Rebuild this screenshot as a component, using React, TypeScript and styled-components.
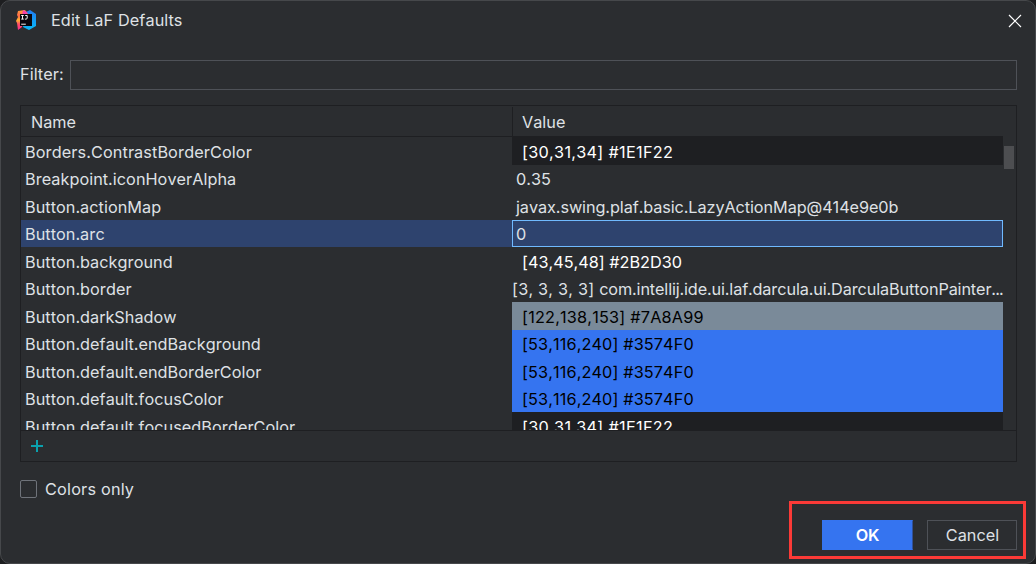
import React from "react";
import styled, { createGlobalStyle } from "styled-components";

const Global = createGlobalStyle`
  * { box-sizing: border-box; }
  html, body { margin: 0; background: #1d1e20; overflow: hidden; }
  body {
    font-family: Inter, "Noto Sans", sans-serif;
    font-size: 16.25px;
    font-kerning: none;
    font-feature-settings: "calt" 0;
    color: #dfe1e5;
    white-space: nowrap;
  }
`;

const Dialog = styled.div`
  position: relative;
  width: 1036px;
  height: 564px;
  display: flex;
  flex-direction: column;
  background: #2b2d30;
  border: 1px solid #46484b;
  border-radius: 10px;
  overflow: hidden;
`;

const TitleBar = styled.header`
  display: flex;
  align-items: center;
  height: 38px;
  padding: 0 13px 0 15px;
`;

const Title = styled.h1`
  flex: 1;
  margin: 0 0 0 15px;
  font-size: 16.25px;
  font-weight: 400;
  line-height: 38px;
  letter-spacing: 0.1px;
`;

const CloseButton = styled.button`
  display: flex;
  margin-top: 2px;
  padding: 0;
  border: 0;
  background: none;
`;

const FilterRow = styled.label`
  display: flex;
  align-items: center;
  height: 30px;
  margin: 21px 18px 0 19px;
`;

const FilterLabel = styled.span`
  width: 50px;
  padding-bottom: 2px;
  letter-spacing: 0.1px;
`;

const FilterInput = styled.input`
  flex: 1;
  height: 30px;
  border: 1px solid #4e5157;
  background: #2b2d30;
  outline: none;
`;

const Table = styled.section`
  display: flex;
  flex-direction: column;
  width: 997px;
  height: 357px;
  margin: 15px 0 0 19px;
  border: 1px solid #1e1f22;
`;

const TableHeader = styled.div`
  display: flex;
  height: 30px;
  line-height: 32px;
`;

const NameHeading = styled.div`
  width: 491px;
  padding-left: 10px;
`;

const ValueHeading = styled.div`
  flex: 1;
  height: 29px;
  margin-top: 1px;
  padding-left: 9px;
  border-left: 1px solid #1e1f22;
  line-height: 30px;
`;

const TableBody = styled.div`
  display: flex;
  height: 294px;
  overflow: hidden;
`;

const Rows = styled.div`
  width: 982px;
`;

const Row = styled.div<{ $height: number; $selected?: boolean }>`
  display: flex;
  height: ${(p) => p.$height}px;
  background: ${(p) => (p.$selected ? "#2e436e" : "transparent")};
`;

const NameCell = styled.div<{ $first?: boolean; $shift: number }>`
  width: 491px;
  padding: ${(p) => p.$shift}px 0 0 4px;
  border-top: ${(p) => (p.$first ? "1px solid #1e1f22" : "0")};
  letter-spacing: ${(p) => (p.$first ? 0.09 : 0.03)}px;
  line-height: 27px;
`;

const ValueCell = styled.div<{
  $fill?: string;
  $ink?: string;
  $indent: number;
  $focused?: boolean;
  $shift: number;
}>`
  width: 491px;
  padding: ${(p) => p.$shift}px 0 0 ${(p) => p.$indent}px;
  background: ${(p) => p.$fill ?? "transparent"};
  color: ${(p) => p.$ink ?? "inherit"};
  box-shadow: ${(p) => (p.$focused ? "inset 0 0 0 1px #70baff" : "none")};
  line-height: 27px;
`;

const Run = styled.span<{ $tracking: number }>`
  letter-spacing: ${(p) => p.$tracking}px;
`;

const ScrollTrack = styled.div`
  flex: 1;
  padding: 10px 2px 0 1px;
`;

const ScrollThumb = styled.div`
  height: 23px;
  background: #4d4e51;
`;

const TableFooter = styled.div`
  flex: 1;
  display: flex;
  align-items: center;
  padding-left: 10px;
  border-top: 1px solid #1e1f22;
`;

const ColorsOnly = styled.label`
  display: flex;
  align-items: center;
  height: 20px;
  margin: 17px 0 0 19px;
  gap: 8px;
  letter-spacing: 0.2px;
`;

const CheckBox = styled.span`
  width: 17px;
  height: 18px;
  border: 1px solid #6f737a;
  border-radius: 2px;
`;

const Buttons = styled.footer`
  display: flex;
  justify-content: flex-end;
  gap: 14px;
  margin: 21px 18px 0 0;
`;

const Button = styled.button<{ $primary?: boolean }>`
  width: ${(p) => (p.$primary ? 91 : 90)}px;
  height: 30px;
  padding: 0 0 0 ${(p) => (p.$primary ? 0 : 1)}px;
  border: 1px solid ${(p) => (p.$primary ? "#3574f0" : "#4e5157")};
  border-right-color: ${(p) => (p.$primary ? "#30519a" : "#4e5157")};
  background: ${(p) => (p.$primary ? "#3574f0" : "#2b2d30")};
  background-clip: padding-box;
  color: ${(p) => (p.$primary ? "#ffffff" : "#dfe1e5")};
  font-family: inherit;
  font-size: 16.25px;
  font-weight: ${(p) => (p.$primary ? 600 : 400)};
  letter-spacing: ${(p) => (p.$primary ? -0.3 : 0)}px;
  line-height: 28px;
`;

const Highlight = styled.div`
  position: absolute;
  left: 788px;
  top: 500px;
  width: 237px;
  height: 58px;
  border: 3px solid #fb3a37;
  pointer-events: none;
`;

type Entry = {
  name: string;
  value: [text: string, tracking: number][];
  height: number;
  fill?: string;
  ink?: string;
  indent: number;
  selected?: boolean;
};

const entries: Entry[] = [
  { name: "Borders.ContrastBorderColor", value: [["[30,31,34] #1E1F22", 0.29]], height: 29, fill: "#1e1f22", ink: "#fff", indent: 10 },
  { name: "Breakpoint.iconHoverAlpha", value: [["0.35", 0]], height: 27, indent: 4 },
  { name: "Button.actionMap", value: [["javax.swing.plaf.basic.LazyActionMap@414e9e0b", -0.08]], height: 28, indent: 4 },
  { name: "Button.arc", value: [["0", 0]], height: 27, indent: 4, selected: true },
  { name: "Button.background", value: [["[43,45,48] #2B2D30", 0]], height: 28, fill: "#2b2d30", ink: "#fff", indent: 10 },
  { name: "Button.border", value: [["[3, 3, 3, 3] ", 0.22], ["com.intellij.ide.ui.laf.darcula.ui.DarculaButtonPainter", -0.14], ["...", -0.9]], height: 27, indent: 0 },
  { name: "Button.darkShadow", value: [["[122,138,153] #7A8A99", 0.2]], height: 28, fill: "#7a8a99", ink: "#000", indent: 10 },
  { name: "Button.default.endBackground", value: [["[53,116,240] #3574F0", 0.12]], height: 27, fill: "#3574f0", ink: "#000", indent: 10 },
  { name: "Button.default.endBorderColor", value: [["[53,116,240] #3574F0", 0.12]], height: 28, fill: "#3574f0", ink: "#000", indent: 10 },
  { name: "Button.default.focusColor", value: [["[53,116,240] #3574F0", 0.12]], height: 27, fill: "#3574f0", ink: "#000", indent: 10 },
  { name: "Button.default.focusedBorderColor", value: [["[30,31,34] #1E1F22", 0.29]], height: 28, fill: "#1e1f22", ink: "#fff", indent: 10 },
];

const AppLogo = () => (
  <svg width="20" height="20" viewBox="0 0 20 20">
    <defs>
      <linearGradient id="warm" x1="0" y1="0" x2="0" y2="1">
        <stop offset="0" stopColor="#ff9a3c" />
        <stop offset=".3" stopColor="#ff6a4a" />
        <stop offset=".5" stopColor="#ffb52e" />
        <stop offset=".7" stopColor="#ff4f63" />
        <stop offset="1" stopColor="#ff2d93" />
      </linearGradient>
      <linearGradient id="cool" x1="0" y1="0" x2="0" y2="1">
        <stop offset="0" stopColor="#217bf0" />
        <stop offset="1" stopColor="#08b9f7" />
      </linearGradient>
    </defs>
    <path d="M10 2 14 0l6 4v12l-7 4-6-3z" fill="url(#cool)" />
    <path d="M2 1 9 0l3 4-5 10-1 3-4 3-1-7-1-2 2-4L1 5z" fill="url(#warm)" />
    <path d="m7 0 4 2 1 4H6z" fill="#f442a5" />
    <rect x="4" y="4" width="12" height="12" fill="#09070d" />
    <path d="M5.2 5.5h2.6M6.5 5.5v3.6M5.2 9.1h2.6M9.2 5.5h2v2.5q0 1.1-1.1 1.1H8.9M5.2 14.2H9.8" fill="none" stroke="#fff" strokeWidth="0.95" />
  </svg>
);

export default function App() {
  return (
    <>
      <Global />
      <Dialog>
        <TitleBar>
          <AppLogo />
          <Title>Edit LaF Defaults</Title>
          <CloseButton aria-label="Close">
            <svg width="14" height="14" viewBox="0 0 14 14">
              <path d="m1 1 12 12M13 1 1 13" stroke="#fff" strokeWidth="1.2" />
            </svg>
          </CloseButton>
        </TitleBar>
        <FilterRow>
          <FilterLabel>Filter:</FilterLabel>
          <FilterInput />
        </FilterRow>
        <Table>
          <TableHeader>
            <NameHeading>Name</NameHeading>
            <ValueHeading>Value</ValueHeading>
          </TableHeader>
          <TableBody>
            <Rows>
              {entries.map((e, i) => (
                <Row key={e.name} $height={e.height} $selected={e.selected}>
                  <NameCell $first={i === 0} $shift={e.height - 26 - (i === 0 ? 1 : 0)}>
                    {e.name}
                  </NameCell>
                  <ValueCell
                    $fill={e.fill}
                    $ink={e.ink}
                    $indent={e.indent}
                    $focused={e.selected}
                    $shift={e.height - 26}
                  >
                    {e.value.map(([text, tracking]) => (
                      <Run key={text} $tracking={tracking}>
                        {text}
                      </Run>
                    ))}
                  </ValueCell>
                </Row>
              ))}
            </Rows>
            <ScrollTrack>
              <ScrollThumb />
            </ScrollTrack>
          </TableBody>
          <TableFooter>
            <svg width="12" height="12" viewBox="0 0 12 12">
              <path d="M6 0v12M0 6h12" stroke="#0ba1ae" strokeWidth="2" />
            </svg>
          </TableFooter>
        </Table>
        <ColorsOnly>
          <CheckBox />
          Colors only
        </ColorsOnly>
        <Buttons>
          <Button $primary>OK</Button>
          <Button>Cancel</Button>
        </Buttons>
        <Highlight />
      </Dialog>
    </>
  );
}
